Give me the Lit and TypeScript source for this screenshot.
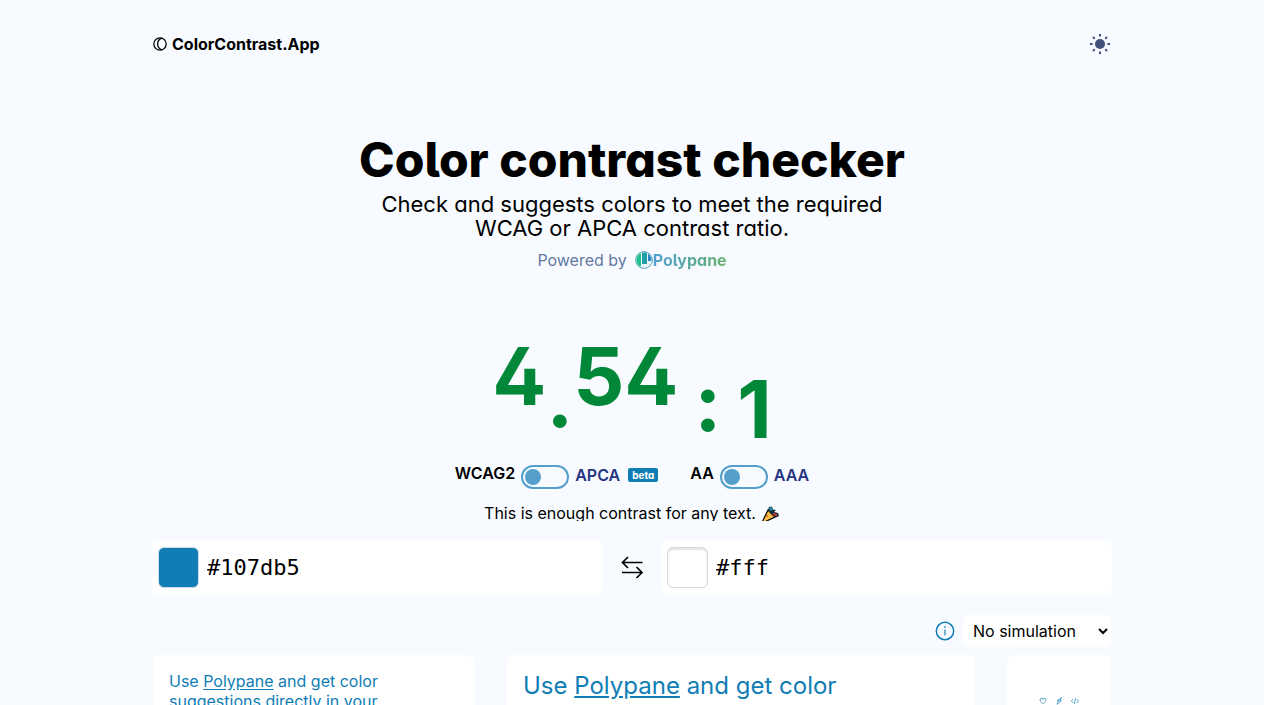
import { LitElement, html, css, svg } from "lit";
import { customElement, state } from "lit/decorators.js";

const heart = svg`<svg viewBox="0 0 24 24"><path d="M12 20S3 14.500 3 9a4.500 4.500 0 0 1 9-1.500A4.500 4.500 0 0 1 21 9c0 5.500-9 11-9 11z"/></svg>`;
const bolt = svg`<svg viewBox="0 0 24 24"><path d="M20 2 6 11h5l-5 11 13-11h-5z"/></svg>`;
const code = svg`<svg viewBox="0 0 24 24"><path d="M7 6 1 12l6 6M17 6l6 6-6 6M14 3l-4 18"/></svg>`;

@customElement("app-root")
export class AppRoot extends LitElement {
  @state() private foreground = "#107db5";
  @state() private background = "#fff";

  static styles = css`
    :host {
      display: block;
      height: 100vh;
      overflow: hidden;
      background: #f7fbff;
      color: #000;
      font: 16px/24px Inter, "Liberation Sans", sans-serif;
    }
    * { box-sizing: border-box; }
    svg { display: block; fill: none; stroke: currentColor; }
    button { padding: 0; border: 0; background: none; color: inherit; font: inherit; cursor: pointer; }
    h1, p { margin: 0; }
    .page { max-width: 960px; margin: 0 auto; }
    header { display: flex; justify-content: space-between; align-items: center; padding-top: 32px; }
    .brand { display: flex; align-items: center; gap: 4px; color: inherit; text-decoration: none; font-weight: 700; }
    .brand svg { width: 16px; height: 16px; }
    .theme { color: #425179; }
    .theme svg { width: 24px; height: 24px; }
    .intro { display: flex; flex-direction: column; align-items: center; padding-top: 80px; text-align: center; font-feature-settings: "cv05", "cv11"; }
    h1 { font-size: 48px; line-height: 48px; font-weight: 800; }
    .lead { padding-top: 8px; max-width: 540px; font-size: 22px; }
    .powered { display: flex; align-items: center; gap: 8px; padding-top: 8px; color: #64789f; }
    .polypane { display: flex; align-items: center; text-decoration: none; font-weight: 700; }
    .polypane svg { width: 18px; height: 18px; stroke: none; }
    .polypane span { background: linear-gradient(90deg, #539fd0, #65b36d); background-clip: text; color: transparent; }
    .ratio { display: flex; justify-content: center; padding-top: 64px; color: #008737; font-size: 80px; line-height: 80px; font-weight: 700; font-feature-settings: "cv02"; }
    .ratio span { display: block; }
    .dot { padding-top: 22px; }
    .colon { padding: 26px 16px 0 16px; }
    .one { padding-top: 33px; }
    .modes { display: flex; justify-content: center; gap: 32px; padding-top: 12px; font-weight: 600; font-feature-settings: "cv11"; }
    .mode { display: flex; align-items: flex-start; gap: 6px; color: #26357f; }
    .mode .on { color: #000; }
    .off { display: flex; align-items: center; gap: 8px; padding-top: 2px; }
    .switch { appearance: none; display: block; width: 48px; height: 24px; margin: 4px 0 0; padding: 2px; border: 2px solid #549fcc; border-radius: 12px; }
    .switch::before { content: ""; display: block; width: 16px; height: 16px; border-radius: 8px; background: #549fcc; }
    .switch:checked::before { margin-left: auto; }
    .beta { padding: 0 4px; border-radius: 2px; background: #107db5; color: #fff; font-size: 10px; line-height: 14px; font-weight: 700; }
    .verdict { display: flex; justify-content: center; gap: 4px; height: 16px; margin-top: 16px; overflow: hidden; line-height: 16px; }
    .verdict svg { width: 20px; height: 20px; stroke: none; }
    .colors { display: grid; grid-template-columns: 1fr 58px 1fr; align-items: center; padding-top: 19px; }
    .field { display: flex; align-items: center; gap: 8px; min-width: 0; padding: 6px; border-radius: 6px; background: #fff; height: 55px; }
    .swatch { flex: none; width: 41px; height: 41px; border-radius: 6px; border: 1px solid #cfdbe4; }
    .swatch.plain { box-shadow: inset 0 2px 2px #e3e3e3; }
    .field input { flex: 1; min-width: 0; border: 0; padding: 0; outline: 0; background: none; font: 22px/32px Consolas, "DejaVu Sans Mono", monospace; color: #000; }
    .swap { justify-self: center; }
    .swap svg { width: 24px; height: 24px; }
    .vision { display: flex; justify-content: flex-end; align-items: center; gap: 8px; padding: 20px 1px 8px; }
    .info { color: #107db5; }
    .info svg { width: 20px; height: 20px; }
    select { width: 148px; height: 32px; padding: 0 0 0 6px; border: 0; border-radius: 6px; background: #fff; color: #000; font: inherit; }
    .samples { display: grid; grid-template-columns: 322fr 468fr 104fr; gap: 32px; padding: 0 1px; }
    .card { min-width: 0; height: 160px; padding: 16px; border-radius: 8px; background: #fff; color: #107db5; line-height: 20px; }
    .card a { color: inherit; text-underline-offset: 2px; }
    .small p { max-width: 230px; }
    .large { font-size: 24px; line-height: 30px; }
    .icons { display: flex; justify-content: center; gap: 8px; padding-top: 26px; }
    .icons svg { width: 8px; height: 8px; stroke-width: 2; }
  `;

  private swap() {
    [this.foreground, this.background] = [this.background, this.foreground];
  }

  render() {
    return html`
      <div class="page">
        <header>
          <a class="brand" href="#">
            <svg viewBox="0 0 16 16" stroke-width="1.300"><circle cx="8" cy="8" r="6.200"/><path d="M10 2.200C4.200 4 4.200 12 10 13.800"/></svg>
            ColorContrast.App
          </a>
          <button class="theme" aria-label="Switch theme">
            <svg viewBox="0 0 24 24" stroke-width="2"><circle cx="12" cy="12" r="5" fill="currentColor" stroke="none"/><path d="M12 2v2.500M12 19.500V22M2 12h2.500M19.500 12H22M5 5l1.700 1.700M17.300 17.300 19 19M5 19l1.700-1.700M17.300 6.700 19 5"/></svg>
          </button>
        </header>
        <section class="intro">
          <h1>Color contrast checker</h1>
          <p class="lead">Check and suggests colors to meet the required WCAG or APCA contrast ratio.</p>
          <div class="powered">
            Powered by
            <a class="polypane" href="#">
              <svg viewBox="0 0 18 18">
                <circle cx="9" cy="9" r="8.400" fill="#e8f4fa" stroke="#5ba9b8"/>
                <path d="M6 2.200A7.400 7.400 0 0 0 6 15.800z" fill="#1dbf8c"/><path d="M7 1.500h5v11.500H7z" fill="#229fa5"/><path d="M13 2.800a7.500 7.500 0 0 1 3.300 7.200H13z" fill="#2d83c4"/>
              </svg><span>Polypane</span>
            </a>
          </div>
        </section>
        <div class="ratio"><span>4</span><span class="dot">.</span><span>54</span><span class="colon">:</span><span class="one">1</span></div>
        <div class="modes">
          <label class="mode"><span class="on">WCAG2</span><input class="switch" type="checkbox" role="switch"><span class="off">APCA <span class="beta">beta</span></span></label>
          <label class="mode"><span class="on">AA</span><input class="switch" type="checkbox" role="switch"><span class="off">AAA</span></label>
        </div>
        <p class="verdict">This is enough contrast for any text.
          <svg viewBox="0 0 20 20"><path d="M8 5 1.500 18.500 15 12z" fill="#fbbd45" stroke="#000" stroke-width="1.200"/><path d="m8 5 1-3 3-.5 1 3 3 .5-2 2 4 1 1 3-3 1.500L11 9z" fill="#142c3a"/><path d="m9 3 3-1 1 3-3 1z" fill="#278dab"/><path d="m13 8 4 1v2l-4-1z" fill="#d33a2c"/><path d="M6 10h2v2H6z" fill="#da7829"/></svg>
        </p>
        <div class="colors">
          <label class="field"><span class="swatch" style="background:${this.foreground}"></span><input aria-label="Text color" .value=${this.foreground}></label>
          <button class="swap" aria-label="Swap colors" @click=${this.swap}>
            <svg viewBox="0 0 24 24" stroke-width="1.700"><path d="M22.500 6.500H2.500M8 1 2.500 6.500 8 12M2 16.500h20M16.500 11l5.500 5.500-5.500 5.500"/></svg>
          </button>
          <label class="field"><span class="swatch plain" style="background:${this.background}"></span><input aria-label="Background color" .value=${this.background}></label>
        </div>
        <div class="vision">
          <button class="info" aria-label="About simulations"><svg viewBox="0 0 20 20" stroke-width="1.500"><circle cx="10" cy="10" r="8.700"/><path d="M10 8.500v6M10 5v2" opacity=".75"/></svg></button>
          <select aria-label="Vision simulation"><option>No simulation</option></select>
        </div>
        <div class="samples">
          <div class="card small"><p>Use <a href="#">Polypane</a> and get color suggestions directly in your</p></div>
          <div class="card large"><p>Use <a href="#">Polypane</a> and get color</p></div>
          <div class="card"><div class="icons">${heart}${bolt}${code}</div></div>
        </div>
      </div>
    `;
  }
}
